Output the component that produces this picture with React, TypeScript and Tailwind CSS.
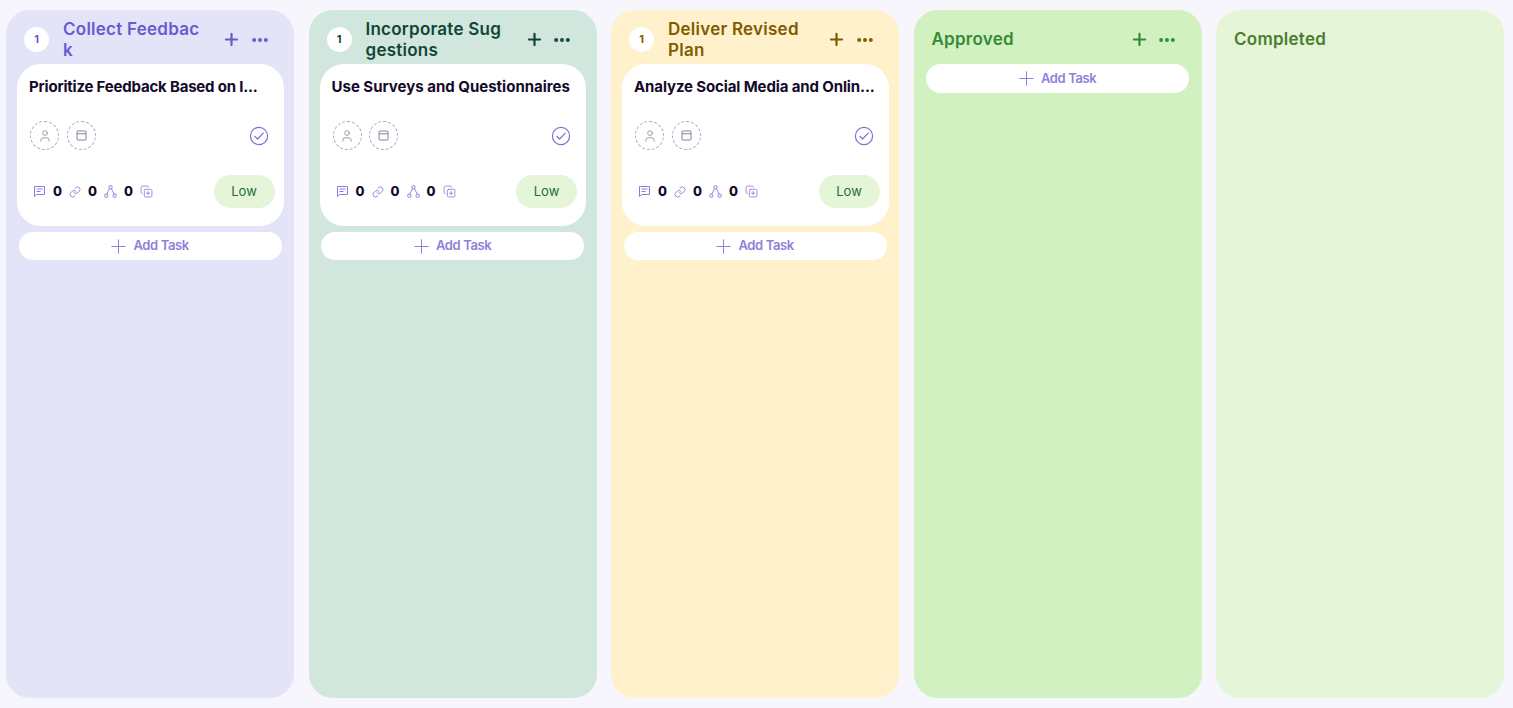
import React from "react";
import { CopyPlus, Link, Plus, User, Ellipsis } from "lucide-react";

type Column = {
  lines: string[];
  bg: string;
  text: string;
  count?: boolean;
  card?: string;
  cardTracking?: string;
  hasAdd?: boolean;
  hasHeaderActions?: boolean;
};

const columns: Column[] = [
  { lines: ["Collect Feedbac", "k"], bg: "bg-[#e4e4f9]", text: "text-[#6a5acd]", count: true, card: "Prioritize Feedback Based on I...", cardTracking: "tracking-[-0.2px]", hasAdd: true, hasHeaderActions: true },
  { lines: ["Incorporate Sug", "gestions"], bg: "bg-[#d1e6dd]", text: "text-[#134537]", count: true, card: "Use Surveys and Questionnaires", cardTracking: "tracking-[0px]", hasAdd: true, hasHeaderActions: true },
  { lines: ["Deliver Revised", "Plan"], bg: "bg-[#fff1cc]", text: "text-[#7f5c00]", count: true, card: "Analyze Social Media and Onlin...", cardTracking: "tracking-[-0.12px]", hasAdd: true, hasHeaderActions: true },
  { lines: ["Approved"], bg: "bg-[#d1f1c0]", text: "text-[#358a36]", hasAdd: true, hasHeaderActions: true },
  { lines: ["Completed"], bg: "bg-[#e5f5d8]", text: "text-[#4c7c2e]" },
];

function CommentIcon() {
  return (
    <svg width="13" height="13" viewBox="0 0 13 13" fill="none" stroke="#8a7bdc" strokeWidth="1" className="shrink-0">
      <path d="M1.5 1.5h10v8h-8l-2 2z" strokeLinejoin="round" />
      <path d="M3.5 4h6M3.5 6.5h4" />
    </svg>
  );
}

function BranchIcon() {
  return (
    <svg width="13" height="13" viewBox="0 0 13 13" fill="none" stroke="#8a7bdc" strokeWidth="0.9" className="shrink-0">
      <rect x="5" y="0.8" width="3" height="3" rx="0.5" />
      <rect x="0.8" y="9.2" width="3" height="3" rx="0.5" />
      <rect x="9.2" y="9.2" width="3" height="3" rx="0.5" />
      <path d="M5.6 3.8 2.6 9.2M7.4 3.8l3 5.4" />
    </svg>
  );
}

function CalendarIcon() {
  return (
    <svg width="11" height="11" viewBox="0 0 11 11" fill="none" stroke="#77758f" strokeWidth="0.9" className="shrink-0">
      <rect x="1" y="1" width="9" height="9" rx="1" />
      <path d="M1 3.8h9" />
    </svg>
  );
}

function CheckIcon() {
  return (
    <svg width="20" height="20" viewBox="0 0 20 20" fill="none" stroke="#7f6fd6" strokeWidth="1.2" className="ml-auto shrink-0">
      <circle cx="10" cy="10" r="8.6" />
      <path d="M5.8 10.3l2.8 2.7 5.6-5.8" strokeLinecap="round" strokeLinejoin="round" />
    </svg>
  );
}

function Stat({ value }: { value: number }) {
  return <span className="text-[13px] font-extrabold text-[#140a2a] mx-[7px]">{value}</span>;
}

function TaskCard({ title, tracking }: { title: string; tracking?: string }) {
  return (
    <div className="h-[162px] rounded-[24px] bg-white pl-3 pr-[9px] flex flex-col">
      <div className={`mt-[13px] h-5 text-[15px] leading-5 font-bold text-[#140a2a] whitespace-nowrap ${tracking}`}>
        {title}
      </div>
      <div className="mt-[24px] flex items-center pl-[1px] pr-[6px]">
        <div className="size-[29px] rounded-full border border-dashed border-[#a8a6bd] flex items-center justify-center">
          <User size={14} strokeWidth={1.2} className="text-[#77758f]" />
        </div>
        <div className="ml-[7.5px] size-[29px] rounded-full border border-dashed border-[#a8a6bd] flex items-center justify-center">
          <CalendarIcon />
        </div>
        <CheckIcon />
      </div>
      <div className="mt-[25px] flex items-center pl-[4px]">
        <CommentIcon />
        <Stat value={0} />
        <Link size={12} strokeWidth={1.8} className="text-[#8a7bdc]" />
        <Stat value={0} />
        <BranchIcon />
        <Stat value={0} />
        <CopyPlus size={13} strokeWidth={1.5} className="text-[#8a7bdc]" />
        <div className="ml-auto h-[33px] w-[61px] rounded-full bg-[#e5f5d8] flex items-center justify-center text-[13px] text-[#1d6b43]">
          Low
        </div>
      </div>
    </div>
  );
}

function AddTask({ first }: { first: boolean }) {
  return (
    <div className={`ml-[1.6px] w-[263px] rounded-full bg-white flex items-center justify-center gap-[3px] pr-[4px] text-[13px] font-semibold text-[#8f80dc] tracking-[-0.4px] ${first ? "h-[29px]" : "h-[28px] mt-[6px]"}`}>
      <Plus size={23} strokeWidth={1.05} />
      Add Task
    </div>
  );
}

function BoardColumn({ col }: { col: Column }) {
  return (
    <div className={`w-[288px] h-[688px] shrink-0 rounded-[24px] pl-[11px] pr-[10.5px] ${col.bg}`}>
      <div className="h-[54px] flex items-center pt-[5px]">
        {col.count && (
          <div className="ml-[7px] mr-[14px] size-[25px] rounded-full bg-white flex items-center justify-center text-[11px] font-bold">
            <span className={col.text}>1</span>
          </div>
        )}
        <div className={`${col.count ? "" : "ml-[7px]"} text-[17px] leading-[21px] font-semibold tracking-[0.25px] whitespace-nowrap ${col.text}`}>
          {col.lines.map((line) => (
            <div key={line}>{line}</div>
          ))}
        </div>
        {col.hasHeaderActions && (
          <div className={`ml-auto mr-[14px] flex items-center gap-[8.5px] ${col.text}`}>
            <Plus size={19} strokeWidth={2.8} />
            <Ellipsis size={20} strokeWidth={2.8} />
          </div>
        )}
      </div>
      {col.card && <TaskCard title={col.card} tracking={col.cardTracking} />}
      {col.hasAdd && <AddTask first={!col.card} />}
    </div>
  );
}

export default function App() {
  return (
    <div className="w-[1513px] h-[708px] overflow-hidden bg-[#f6f6fc] pt-[10px] pl-[6px] flex gap-[14.5px] font-['Inter',sans-serif]">
      {columns.map((col) => (
        <BoardColumn key={col.lines[0]} col={col} />
      ))}
    </div>
  );
}
